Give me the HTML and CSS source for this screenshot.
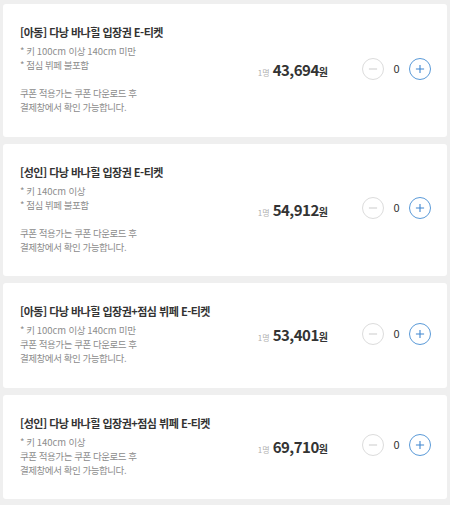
FILE: index.html
```html
<!DOCTYPE html>
<html lang="ko">
<head>
<meta charset="utf-8">
<link rel="stylesheet" href="styles.css">
</head>
<body>
<div class="list">
  <div class="card">
    <div class="info">
      <div class="title">[아동] 다낭 바나힐 입장권 E-티켓</div>
      <div class="desc">* 키 <span class="en">100cm</span> 이상 <span class="en">140cm</span> 미만<br>* 점심 뷔페 불포함<br><br>쿠폰 적용가는 쿠폰 다운로드 후<br>결제창에서 확인 가능합니다.</div>
    </div>
    <div class="price"><span class="unit">1명</span><span class="num">43,694</span><span class="won">원</span></div>
    <div class="stepper">
      <button class="btn minus"><svg viewBox="0 0 22 22"><path d="M6.5 11h9"/></svg></button>
      <span class="qty">0</span>
      <button class="btn plus"><svg viewBox="0 0 22 22"><path d="M6.5 11h9M11 6.5v9"/></svg></button>
    </div>
  </div>
  <div class="card">
    <div class="info">
      <div class="title">[성인] 다낭 바나힐 입장권 E-티켓</div>
      <div class="desc">* 키 <span class="en">140cm</span> 이상<br>* 점심 뷔페 불포함<br><br>쿠폰 적용가는 쿠폰 다운로드 후<br>결제창에서 확인 가능합니다.</div>
    </div>
    <div class="price"><span class="unit">1명</span><span class="num">54,912</span><span class="won">원</span></div>
    <div class="stepper">
      <button class="btn minus"><svg viewBox="0 0 22 22"><path d="M6.5 11h9"/></svg></button>
      <span class="qty">0</span>
      <button class="btn plus"><svg viewBox="0 0 22 22"><path d="M6.5 11h9M11 6.5v9"/></svg></button>
    </div>
  </div>
  <div class="card">
    <div class="info">
      <div class="title">[아동] 다낭 바나힐 입장권+점심 뷔페 E-티켓</div>
      <div class="desc">* 키 <span class="en">100cm</span> 이상 <span class="en">140cm</span> 미만<br>쿠폰 적용가는 쿠폰 다운로드 후<br>결제창에서 확인 가능합니다.</div>
    </div>
    <div class="price"><span class="unit">1명</span><span class="num">53,401</span><span class="won">원</span></div>
    <div class="stepper">
      <button class="btn minus"><svg viewBox="0 0 22 22"><path d="M6.5 11h9"/></svg></button>
      <span class="qty">0</span>
      <button class="btn plus"><svg viewBox="0 0 22 22"><path d="M6.5 11h9M11 6.5v9"/></svg></button>
    </div>
  </div>
  <div class="card">
    <div class="info">
      <div class="title">[성인] 다낭 바나힐 입장권+점심 뷔페 E-티켓</div>
      <div class="desc">* 키 <span class="en">140cm</span> 이상<br>쿠폰 적용가는 쿠폰 다운로드 후<br>결제창에서 확인 가능합니다.</div>
    </div>
    <div class="price"><span class="unit">1명</span><span class="num">69,710</span><span class="won">원</span></div>
    <div class="stepper">
      <button class="btn minus"><svg viewBox="0 0 22 22"><path d="M6.5 11h9"/></svg></button>
      <span class="qty">0</span>
      <button class="btn plus"><svg viewBox="0 0 22 22"><path d="M6.5 11h9M11 6.5v9"/></svg></button>
    </div>
  </div>
</div>
</body>
</html>
```
FILE: styles.css
```css
* { box-sizing: border-box; }
html, body { margin: 0; padding: 0; }
body {
  background: #efefef;
  font-family: "Noto Sans CJK KR", "Noto Sans", sans-serif;
  color: #333;
}
.list {
  display: flex;
  flex-direction: column;
  gap: 7px;
  padding: 4px 3px;
}
.card {
  background: #fff;
  border-radius: 3px;
  display: flex;
  align-items: center;
  padding: 19px 16px 22.5px 17px;
}
.info { flex: 1; min-width: 0; }
.title {
  font-size: 11px;
  font-weight: 700;
  line-height: 18px;
  letter-spacing: -0.5px;
  color: #333;
  margin-bottom: 3px;
}
.desc {
  font-size: 9.5px;
  line-height: 14px;
  color: #8c8c8c;
  letter-spacing: -0.45px;
}
.en { letter-spacing: 0; }
.price {
  display: flex;
  align-items: baseline;
  margin-right: 34px;
  margin-top: 2px;
}
.unit { font-size: 8px; color: #b0b0b0; margin-right: 3px; }
.num { font-size: 15px; font-weight: 700; color: #333; letter-spacing: -0.5px; }
.won { font-size: 10px; font-weight: 700; color: #333; }
.stepper {
  display: flex;
  align-items: center;
  gap: 8px;
}
.btn {
  width: 22px;
  height: 22px;
  border-radius: 50%;
  padding: 0;
  background: #fff;
  display: flex;
  align-items: center;
  justify-content: center;
}
.btn svg { width: 22px; height: 22px; fill: none; stroke-width: 1.2; }
.minus { border: 1px solid #dcdcdc; }
.minus svg { stroke: #cfcfcf; }
.plus { border: 1px solid #5a9ad8; }
.plus svg { stroke: #3f86d0; }
.qty {
  font-size: 11px;
  color: #333;
  width: 9px;
  text-align: center;
  margin-top: -2px;
}
```
